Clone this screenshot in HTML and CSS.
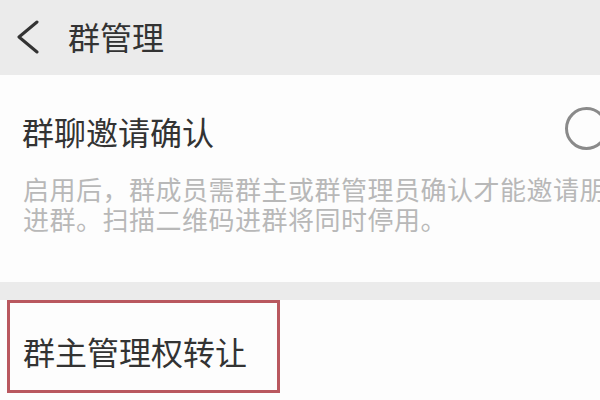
FILE: index.html
```html
<!DOCTYPE html>
<html lang="zh-CN">
<head>
<meta charset="utf-8">
<title>群管理</title>
<link rel="stylesheet" href="styles.css">
</head>
<body>
<div class="page">
  <header class="topbar">
    <svg class="back" width="24" height="34" viewBox="0 0 24 34" aria-hidden="true">
      <polyline points="21,2 3,17 21,32" fill="none" stroke="#333" stroke-width="3" stroke-linecap="round" stroke-linejoin="round"/>
    </svg>
    <h1 class="topbar-title">群管理</h1>
  </header>

  <section class="panel panel-invite">
    <div class="setting-row">
      <span class="setting-title">群聊邀请确认</span>
      <span class="toggle"></span>
    </div>
    <p class="setting-desc">启用后，群成员需群主或群管理员确认才能邀请朋友进群。扫描二维码进群将同时停用。</p>
  </section>

  <div class="gap"></div>

  <section class="panel panel-transfer">
    <div class="highlight">
      <span class="setting-title">群主管理权转让</span>
    </div>
  </section>
</div>
</body>
</html>
```

FILE: styles.css
```css
html, body {
  margin: 0;
  padding: 0;
  background: #fdfdfd;
}

body {
  font-family: "Noto Sans CJK SC", "Noto Sans", sans-serif;
  color: #333;
}

.page {
  width: 600px;
  height: 400px;
  overflow: hidden;
  display: flex;
  flex-direction: column;
}

.topbar {
  height: 75px;
  flex: none;
  background: #ebebeb;
  display: flex;
  align-items: center;
  padding-left: 16px;
  box-sizing: border-box;
}

.back {
  display: block;
  margin-top: -1px;
}

.topbar-title {
  margin: -3px 0 0 28px;
  font-size: 32px;
  font-weight: 400;
  line-height: 40px;
  color: #333;
}

.panel {
  background: #fdfdfd;
  flex: none;
}

.panel-invite {
  height: 207px;
  padding: 36px 0 0 22px;
  box-sizing: border-box;
}

.setting-row {
  display: flex;
  align-items: center;
  justify-content: space-between;
  height: 40px;
}

.setting-title {
  font-size: 32px;
  line-height: 40px;
  color: #333;
}

.toggle {
  width: 43px;
  height: 43px;
  box-sizing: border-box;
  border: 3px solid #8a8a8a;
  border-radius: 50%;
  margin-right: -8px;
  margin-bottom: 6px;
  flex: none;
}

.setting-desc {
  margin: 23px 0 0 1px;
  width: 612px;
  font-size: 26px;
  letter-spacing: 0.5px;
  line-height: 30px;
  color: #b8b8b8;
}

.gap {
  height: 18px;
  flex: none;
  background: #ebebeb;
}

.panel-transfer {
  height: 100px;
  padding-left: 7px;
}

.highlight {
  width: 273px;
  height: 93px;
  box-sizing: border-box;
  border: 3px solid #b9585f;
  display: flex;
  align-items: center;
  padding: 8px 0 0 13px;
}
```
